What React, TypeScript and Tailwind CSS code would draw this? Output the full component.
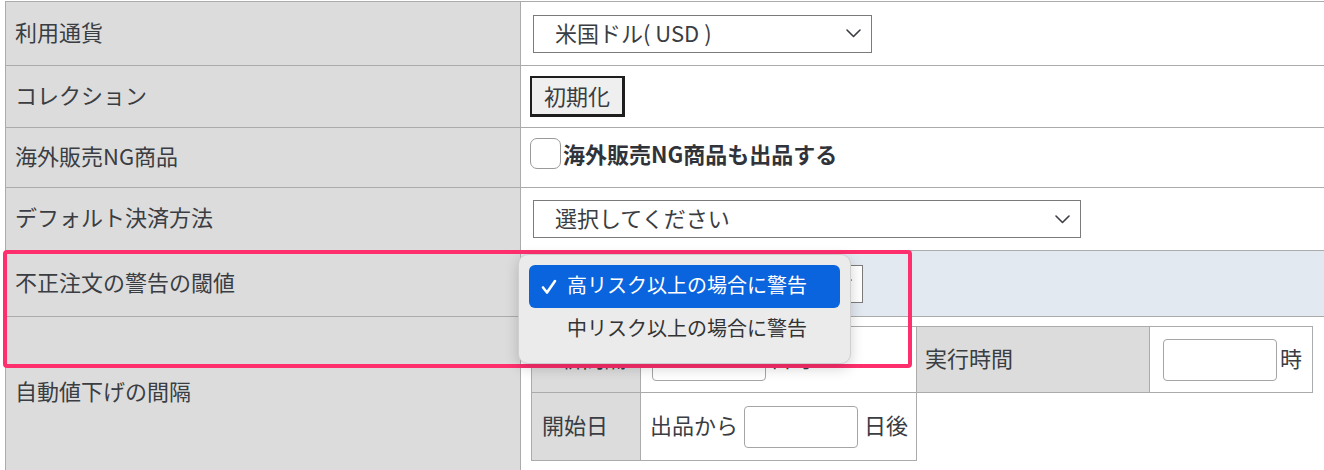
import React from 'react'

const font = { fontFamily: '"Noto Sans CJK JP", "Noto Sans", sans-serif' }

function Chevron({ className = '' }: { className?: string }) {
  return (
    <svg width="15" height="9" viewBox="0 0 15 9" fill="none" className={className} aria-hidden="true">
      <path d="M1 1l6.5 6.5L14 1" stroke="#3a3d42" strokeWidth="1.6" strokeLinecap="round" strokeLinejoin="round" />
    </svg>
  )
}

function FakeSelect({ label, width }: { label: string; width: string }) {
  return (
    <div
      className={`ml-[3px] flex h-[38px] items-center justify-between border border-[#7b7b7b] bg-white pl-[21px] pr-[10px] ${width}`}
    >
      <span className="pb-[4px] leading-none">{label}</span>
      <Chevron />
    </div>
  )
}

function Row({
  label,
  h,
  valueBg = 'bg-white',
  children,
}: {
  label: string
  h: string
  valueBg?: string
  children?: React.ReactNode
}) {
  return (
    <div className={`flex border-b border-[#ababab] ${h}`}>
      <div className="flex w-[515px] shrink-0 items-center border-r border-[#ababab] bg-[#dcdcdc] pb-[5px] pl-[9px]">
        {label}
      </div>
      <div className={`flex flex-1 items-center pl-[9px] ${valueBg}`}>{children}</div>
    </div>
  )
}

function SmallInput() {
  return <div className="h-[42px] w-[114px] rounded-[4px] border border-[#a5a5a5] bg-white" />
}

export default function App() {
  return (
    <div
      className="relative h-[470px] w-[1324px] overflow-hidden bg-white pl-[5px] pt-[1px] text-[22px] text-[#3a3d42]"
      style={font}
    >
      <div className="border-l border-t border-[#ababab]">
        <Row label="利用通貨" h="h-[64px]">
          <FakeSelect label="米国ドル( USD )" width="w-[339px]" />
        </Row>
        <Row label="コレクション" h="h-[62px]">
          <div className="flex h-[41px] w-[95px] items-center justify-center border-2 border-b-[3px] border-r-[3px] border-[#1e1e1e] bg-[#efefef] pb-[3px] leading-none">
            初期化
          </div>
        </Row>
        <Row label="海外販売NG商品" h="h-[60px]">
          <div className="flex items-start self-start pt-[10px]">
            <div className="h-[31px] w-[31px] rounded-[7px] border border-[#9a9a9a] bg-white" />
            <span className="ml-[2px] pt-[4px] font-bold leading-none text-[#30343a]">海外販売NG商品も出品する</span>
          </div>
        </Row>
        <Row label="デフォルト決済方法" h="h-[63px]">
          <FakeSelect label="選択してください" width="w-[548px]" />
        </Row>
        <Row label="不正注文の警告の閾値" h="h-[66px]" valueBg="bg-[#e3e9f1]">
          <FakeSelect label="" width="w-[330px]" />
        </Row>
        <div className="flex h-[160px]">
          <div className="flex w-[515px] shrink-0 items-start border-r border-[#ababab] bg-[#dcdcdc] pl-[9px] pt-[57px]">
            自動値下げの間隔
          </div>
          <div className="flex-1 bg-white pl-[10px] pt-[9px]">
            <div className="grid w-[782px] grid-cols-[110px_276px_233px_163px] grid-rows-[67px_68px]">
              <div className="flex items-center border border-[#ababab] bg-[#dcdcdc] pb-[4px] pl-[10px]">
                <span className="mr-[6px] text-[18px]">✓</span>新間隔
              </div>
              <div className="flex items-center gap-[4px] border-y border-r border-[#ababab] pl-[11px]">
                <SmallInput />
                <span className="pb-[4px]">日毎</span>
              </div>
              <div className="flex items-center border-y border-r border-[#ababab] bg-[#dcdcdc] pb-[4px] pl-[8px]">
                実行時間
              </div>
              <div className="flex items-center gap-[3px] border-y border-r border-[#ababab] pl-[13px]">
                <SmallInput />
                <span className="pb-[4px]">時</span>
              </div>
              <div className="flex items-center border-x border-b border-[#ababab] bg-[#dcdcdc] pb-[4px] pl-[10px]">
                開始日
              </div>
              <div className="flex items-center gap-[6px] border-b border-r border-[#ababab] pl-[9px]">
                <span className="pb-[4px]">出品から</span>
                <SmallInput />
                <span className="pb-[4px]">日後</span>
              </div>
            </div>
          </div>
        </div>
      </div>

      {/* highlight annotation */}
      <div className="pointer-events-none absolute left-[3px] top-[250px] h-[118px] w-[909px] rounded-[4px] border-[4px] border-[#ff2f6e]" />

      {/* native select popup */}
      <div className="absolute left-[518px] top-[254px] w-[333px] rounded-[10px] border border-[#cfcfcf] bg-[#ebebeb] p-[10px] pb-[12px] text-[20px] shadow-[0_4px_14px_rgba(0,0,0,0.18)]">
        <div className="flex h-[43px] items-center rounded-[6px] bg-[#0a64de] pl-[12px] text-white">
          <svg width="16" height="16" viewBox="0 0 16 16" fill="none" className="mr-[10px]" aria-hidden="true">
            <path d="M2 8.5l4 5L14 2" stroke="white" strokeWidth="2.6" strokeLinecap="round" strokeLinejoin="round" />
          </svg>
          <span className="pb-[3px] leading-none">高リスク以上の場合に警告</span>
        </div>
        <div className="flex h-[43px] items-center pl-[38px] text-[#333]">
          <span className="pb-[3px] leading-none">中リスク以上の場合に警告</span>
        </div>
      </div>
    </div>
  )
}
